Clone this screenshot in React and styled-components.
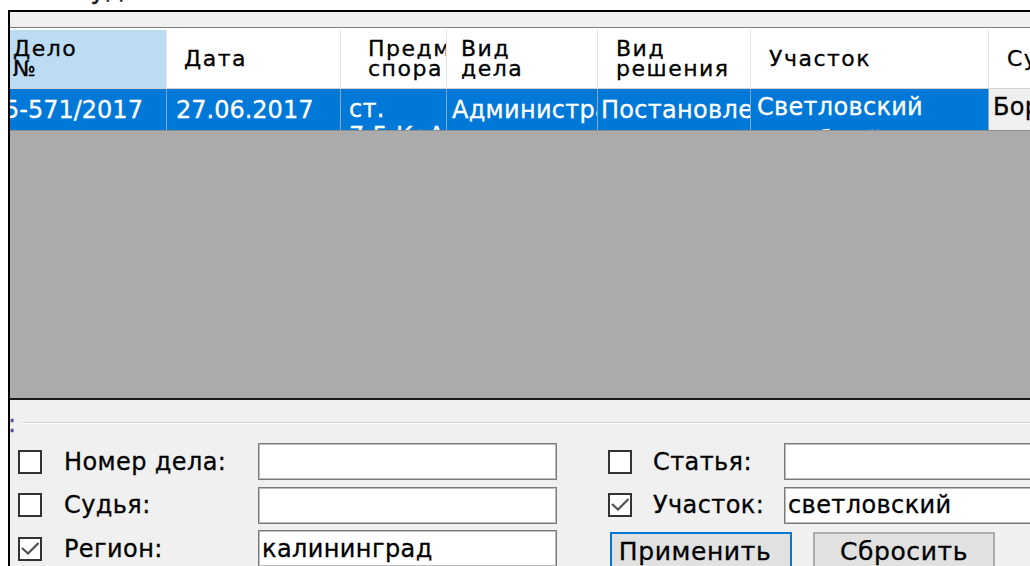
import React from 'react';
import styled, { createGlobalStyle } from 'styled-components';

const Global = createGlobalStyle`
  html, body {
    margin: 0;
    padding: 0;
    background: #ffffff;
  }
  body {
    width: 1030px;
    height: 566px;
    overflow: hidden;
    font-family: "DejaVu Sans", "Noto Sans", sans-serif;
    -webkit-text-stroke: 0.3px currentColor;
  }
`;

const Screen = styled.div`
  width: 1030px;
  height: 566px;
  overflow: hidden;
  background: #ffffff;
  display: flex;
  flex-direction: column;
`;

/* caption above the form, mostly scrolled out of view */
const CaptionClip = styled.div`
  flex: none;
  height: 10px;
  overflow: hidden;
  padding-left: 72px;
`;

const CaptionText = styled.div`
  font-size: 26px;
  line-height: 1;
  margin-top: -24px;
  color: #1b1b1b;
  white-space: nowrap;
`;

const Frame = styled.div`
  flex: 1;
  min-height: 0;
  width: 1060px;
  margin-left: 8px;
  border-left: 2px solid #000;
  border-top: 2px solid #000;
  display: flex;
  flex-direction: column;
`;

const ToolStrip = styled.div`
  flex: none;
  height: 15px;
  background: #f0f0f0;
  border-bottom: 1px solid #7c7c7c;
  margin-bottom: 2px;
`;

/* ---------- data grid ---------- */

const Grid = styled.div`
  flex: none;
  display: flex;
  flex-direction: column;
`;

const HeaderRow = styled.div`
  display: flex;
  height: 59px;
  box-sizing: border-box;
  border-bottom: 1px solid #d3d3d3;
  background: #ffffff;
`;

const HeaderCell = styled.div`
  flex: none;
  width: ${(p) => p.$w}px;
  box-sizing: border-box;
  padding-left: ${(p) => p.$pad}px;
  border-right: 1px solid #e4e4e4;
  background: ${(p) => (p.$active ? '#bcdcf4' : '#ffffff')};
  display: flex;
  align-items: center;
  overflow: hidden;
  font-size: 22px;
  line-height: 20px;
  letter-spacing: 1.5px;
  color: #000;
  white-space: pre;
`;

const DataRow = styled.div`
  display: flex;
  height: 42px;
  box-sizing: border-box;
  border-bottom: 1px solid #8f8f8f;
  background: #0078d7;
`;

const Cell = styled.div`
  flex: none;
  width: ${(p) => p.$w}px;
  box-sizing: border-box;
  padding-left: ${(p) => p.$pad}px;
  padding-top: ${(p) => (p.$wrap ? p.$top ?? 1 : 0)}px;
  border-right: 1px solid #8ea6bd;
  display: flex;
  align-items: ${(p) => (p.$wrap ? 'flex-start' : 'center')};
  overflow: hidden;
  font-size: 24px;
  line-height: ${(p) => (p.$wrap ? p.$lh ?? 34 : 28)}px;
  letter-spacing: ${(p) => p.$ls ?? 0.3}px;
  color: ${(p) => (p.$plain ? '#000' : '#ffffff')};
  background: ${(p) => (p.$plain ? '#efefef' : 'transparent')};
  white-space: ${(p) => (p.$wrap ? 'pre' : 'nowrap')};
`;

const CellText = styled.span`
  display: block;
  text-indent: ${(p) => p.$indent ?? 0}px;
`;

const EmptyArea = styled.div`
  flex: none;
  height: 267px;
  background: #ababab;
  border-bottom: 2px solid #1a1a1a;
`;

/* ---------- filter panel ---------- */

const Panel = styled.div`
  flex: 1;
  background: #f0f0f0;
  display: flex;
  flex-direction: column;
`;

const GroupHead = styled.div`
  flex: none;
  height: 43px;
  display: flex;
  align-items: flex-start;
  padding-top: 12px;
  box-sizing: border-box;
`;

const GroupCaption = styled.span`
  font-size: 24px;
  line-height: 24px;
  color: #5a4c9c;
  margin-left: -2px;
  margin-right: 6px;
`;

const GroupRule = styled.div`
  flex: 1;
  margin-top: 10px;
  height: 1px;
  background: #d6d6d6;
  border-bottom: 1px solid #ffffff;
`;

const Fields = styled.div`
  display: grid;
  grid-template-columns: 24px 216px 299px 51px 24px 152px 300px;
  grid-auto-rows: 37px;
  row-gap: 6.5px;
  padding-left: 8px;
  align-items: center;
`;

const Box = styled.span`
  width: 24px;
  height: 24px;
  box-sizing: border-box;
  border: 2px solid #333333;
  background: #ffffff;
  display: flex;
  align-items: center;
  justify-content: center;
`;

const Label = styled.span`
  padding-left: ${(p) => p.$pad ?? 22}px;
  font-size: 24px;
  letter-spacing: 0.4px;
  color: #000;
  white-space: nowrap;
`;

const Input = styled.div`
  height: 37px;
  box-sizing: border-box;
  border: 1px solid #7a7a7a;
  box-shadow: inset 0 0 0 1px #bcbcbc;
  background: #ffffff;
  display: flex;
  align-items: center;
  padding-left: 3px;
  font-size: 24px;
  letter-spacing: 0.4px;
  color: #000;
  white-space: nowrap;
  overflow: hidden;
`;

const ButtonBar = styled.div`
  grid-column: 5 / 8;
  align-self: start;
  display: flex;
  gap: 21px;
  padding-left: 2px;
  margin-top: 2px;
`;

const Button = styled.div`
  width: 182px;
  height: 42px;
  box-sizing: border-box;
  background: #e1e1e1;
  border: 2px solid ${(p) => (p.$primary ? '#0078d7' : '#adadad')};
  display: flex;
  justify-content: center;
  padding-top: 5px;
  padding-right: ${(p) => (p.$primary ? 12 : 0)}px;
  font-size: 25px;
  line-height: 25px;
  letter-spacing: 0.6px;
  color: #000;
`;

function CheckBox({ checked }) {
  return (
    <Box>
      {checked && (
        <svg width="20" height="20" viewBox="0 0 20 20">
          <polyline points="2,9 8,14.5 18.5,4" fill="none" stroke="#505050" strokeWidth="2.2" />
        </svg>
      )}
    </Box>
  );
}

const headers = [
  { w: 157, pad: 3, text: 'Дело\n№', active: true },
  { w: 174, pad: 17, text: 'Дата' },
  { w: 106, pad: 27, text: 'Предмет\nспора' },
  { w: 151, pad: 14, text: 'Вид\nдела' },
  { w: 153, pad: 18, text: 'Вид\nрешения' },
  { w: 238, pad: 18, text: 'Участок' },
  { w: 200, pad: 18, text: 'Судья' },
];

export default function App() {
  return (
    <Screen>
      <Global />
      <CaptionClip>
        <CaptionText>Суды</CaptionText>
      </CaptionClip>
      <Frame>
        <ToolStrip />
        <Grid>
          <HeaderRow>
            {headers.map((h) => (
              <HeaderCell key={h.text} $w={h.w} $pad={h.pad} $active={h.active}>
                {h.text}
              </HeaderCell>
            ))}
          </HeaderRow>
          <DataRow>
            <Cell $w={157} $pad={0} $ls={0}>
              <CellText $indent={-6}>5-571/2017</CellText>
            </Cell>
            <Cell $w={174} $pad={9} $ls={0}>27.06.2017</Cell>
            <Cell $w={106} $pad={8} $wrap $top={7} $lh={27}>{'ст.\n7.5 КоАП'}</Cell>
            <Cell $w={151} $pad={5}>Административное</Cell>
            <Cell $w={153} $pad={3}>Постановление</Cell>
            <Cell $w={238} $pad={6} $wrap>{'Светловский\nсудебный участок'}</Cell>
            <Cell $w={200} $pad={4} $wrap $plain>{'Бородин\nО. В.'}</Cell>
          </DataRow>
          <EmptyArea />
        </Grid>
        <Panel>
          <GroupHead>
            <GroupCaption>:</GroupCaption>
            <GroupRule />
          </GroupHead>
          <Fields>
            <CheckBox />
            <Label>Номер дела:</Label>
            <Input />
            <span />
            <CheckBox />
            <Label $pad={21}>Статья:</Label>
            <Input />

            <CheckBox />
            <Label>Судья:</Label>
            <Input />
            <span />
            <CheckBox checked />
            <Label $pad={21}>Участок:</Label>
            <Input>светловский</Input>

            <CheckBox checked />
            <Label>Регион:</Label>
            <Input>калининград</Input>
            <span />
            <ButtonBar>
              <Button $primary>Применить</Button>
              <Button>Сбросить</Button>
            </ButtonBar>
          </Fields>
        </Panel>
      </Frame>
    </Screen>
  );
}
